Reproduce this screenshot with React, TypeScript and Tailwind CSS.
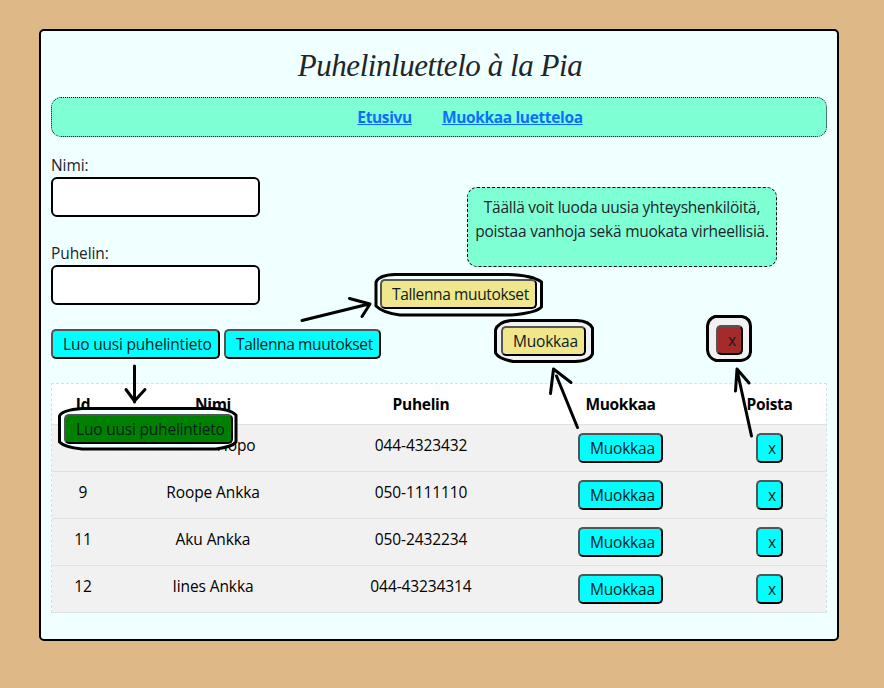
import React from "react";

type ButtonProps = { label: string; className: string };

function OutsetButton({ label, className }: ButtonProps) {
  return (
    <button
      type="button"
      className={`h-[30px] shrink-0 rounded-[5px] border-2 border-black pl-[10px] text-left leading-[26px] whitespace-nowrap text-[#0b1c20] [border-style:outset] ${className}`}
    >
      {label}
    </button>
  );
}

const contacts = [
  { id: "", name: "Hopo", phone: "044-4323432" },
  { id: "9", name: "Roope Ankka", phone: "050-1111110" },
  { id: "11", name: "Aku Ankka", phone: "050-2432234" },
  { id: "12", name: "Iines Ankka", phone: "044-43234314" },
];

const columns = "grid grid-cols-[62px_198px_218px_181px_117px] text-center";

function Field({ label }: { label: string }) {
  return (
    <label className="flex flex-col">
      <span className="h-[23px] leading-[22px]">{label}</span>
      <input className="h-10 w-[209px] rounded-[6px] border-2 border-black bg-white px-2" />
    </label>
  );
}

export default function App() {
  return (
    <div className="relative h-[688px] w-[884px] overflow-hidden bg-[#deb887] pt-[29px] pl-[39px] font-['Open_Sans',sans-serif] text-[15.5px] tracking-[-0.1px] text-[#212529]">
      <main className="h-[612px] w-[800px] rounded-[5px] border-2 border-black bg-[#f0ffff] p-[10px]">
        <h1 className="h-14 pl-[2px] text-center font-['Liberation_Serif',serif] text-[31px] leading-[50px] tracking-[-0.45px] whitespace-nowrap italic">
          Puhelinluettelo à la Pia
        </h1>
        <nav className="flex h-10 justify-center gap-[30px] rounded-[10px] border border-dotted border-black bg-[#7fffd4] pl-[62px] leading-[39px] font-bold tracking-[-0.35px] text-[#0d6efd]">
          <a className="underline">Etusivu</a>
          <a className="underline">Muokkaa luetteloa</a>
        </nav>

        <div className="flex justify-between pr-[50px]">
          <form className="flex flex-col pt-[17px]">
            <Field label="Nimi:" />
            <div className="h-[25px]" />
            <Field label="Puhelin:" />
            <div className="mt-6 flex gap-1">
              <OutsetButton label="Luo uusi puhelintieto" className="w-[169px] bg-[#00ffff] tracking-[-0.2px]" />
              <OutsetButton label="Tallenna muutokset" className="w-[157px] bg-[#00ffff] tracking-[-0.36px]" />
            </div>
          </form>
          <p className="-ml-10 mt-[50px] h-20 w-[310px] rounded-[10px] border border-dashed border-black bg-[#7fffd4] pt-[7px] text-center leading-6 tracking-[-0.24px] whitespace-nowrap">
            Täällä voit luoda uusia yhteyshenkilöitä,
            <br />
            poistaa vanhoja sekä muokata virheellisiä.
          </p>
        </div>

        <section className="mt-6 border border-b-0 border-dashed border-[#cfe2e4] bg-white text-black">
          <div className={`${columns} h-[41px] border-b border-[#dee2e6] pt-2 leading-6 font-bold tracking-[-0.3px]`}>
            <span>Id</span>
            <span>Nimi</span>
            <span>Puhelin</span>
            <span>Muokkaa</span>
            <span>Poista</span>
          </div>
          {contacts.map((c) => (
            <div key={c.phone} className={`${columns} h-[47px] border-b border-[#dee2e6] bg-[#f1f1f1] pt-2 leading-6`}>
              <span>{c.id}</span>
              <span className={c.id ? "" : "pl-[46px]"}>{c.name}</span>
              <span>{c.phone}</span>
              <span className="flex justify-center">
                <OutsetButton label="Muokkaa" className="w-[85px] bg-[#00ffff] tracking-[-0.2px]" />
              </span>
              <span className="flex justify-center">
                <OutsetButton label="x" className="w-[27px] bg-[#00ffff]" />
              </span>
            </div>
          ))}
        </section>
      </main>

      {/* Hand-drawn outlines and arrows showing each button's hover colour */}
      <svg className="absolute inset-0" width="884" height="688" fill="none" stroke="#000" strokeWidth="3" strokeLinecap="round" strokeLinejoin="round">
        <path fill="#f0ffff" d="M82 408.500H214Q230 409 236 415V442Q232 447 216 449H82Q64 447 59.500 442V416Q62 410 82 408.500Z" />
        <path fill="#f0ffff" d="M395 274.500H506Q532 275 541.500 282V307Q536 313 511 315H400Q383 313 376 306V282Q379 275 395 274.500Z" />
        <path fill="#f1f1f1" d="M511 320.500H577Q589 321 592.500 328V354Q590 361 575 361.500H513Q499 359 495.500 353V330Q498 322 511 320.500Z" />
        <path fill="#f1f1f1" d="M715 316.500H742Q750 318 750.500 326V352Q750 359 741 360.500H716Q708 358 707.500 350V326Q708 319 715 316.500Z" />
        <path d="M134.500 366V402M126 389.500L134.500 401L145 389.500" />
        <path d="M302 320.500L369 304M349.500 298.500L370 304L362 316.500" />
        <path d="M577.500 427.500L556.500 376M550.500 393.500L553.500 369L571 382.500" />
        <path d="M751.500 436L737 370M735.500 391L737 369L749 383" />
      </svg>
      <div className="absolute top-[414px] left-[64px] flex">
        <OutsetButton label="Luo uusi puhelintieto" className="w-[169px] bg-[#008000] tracking-[-0.2px]" />
      </div>
      <div className="absolute top-[279px] left-[380px] flex">
        <OutsetButton label="Tallenna muutokset" className="w-[157px] bg-[#f0e68c] tracking-[-0.36px]" />
      </div>
      <div className="absolute top-[326px] left-[501px] flex">
        <OutsetButton label="Muokkaa" className="w-[85px] bg-[#f0e68c] tracking-[-0.2px]" />
      </div>
      <div className="absolute top-[325px] left-[716px] flex">
        <OutsetButton label="x" className="w-[27px] bg-[#a52a2a]" />
      </div>
    </div>
  );
}
